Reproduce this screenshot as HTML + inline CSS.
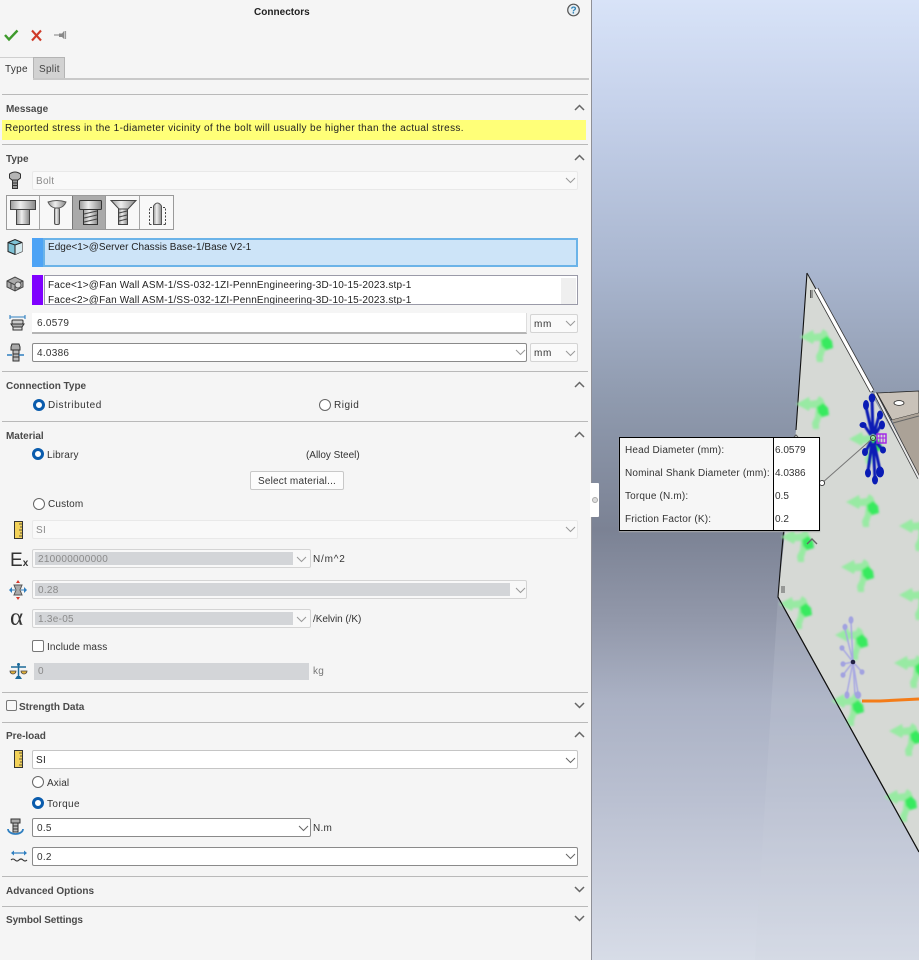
<!DOCTYPE html>
<html><head><meta charset="utf-8">
<style>
html,body{margin:0;padding:0}
body{width:919px;height:960px;overflow:hidden;position:relative;background:#f5f5f5;font-family:"Liberation Sans",sans-serif;font-size:10px;color:#333}
.a{position:absolute}
.t{position:absolute;white-space:nowrap;line-height:14px;letter-spacing:.28px;margin-top:2px}
.h{font-weight:bold;color:#4a4a4a;letter-spacing:-.02px}
.l{position:absolute;left:2px;width:586px;height:1px;background:#b9b9b9}
.f{position:absolute;box-sizing:border-box;background:#fff;border:1px solid #8a8a8a;border-radius:2px}
.d{position:absolute;box-sizing:border-box;background:#f9f9f9;border:1px solid #e9e9e9;border-radius:2px}
.g{position:absolute;box-sizing:border-box;background:#f8f8f8;border:1px solid #d4d4d4;border-radius:2px}
.i{position:absolute;background:#d3d5d8}
.r{position:absolute;box-sizing:border-box;width:12px;height:12px;border-radius:50%;border:1px solid #666;background:#fff}
.r.on{border:3.5px solid #0a5cad;background:#fff}
.c{position:absolute;overflow:visible}
</style></head><body>

<!-- viewport -->
<div class="a" style="left:592px;top:0;width:327px;height:960px;background:linear-gradient(180deg,#d8e3f8 0,#c5d1ea 110px,#a9b6cf 270px,#8f9aae 400px,#7b8294 530px,#9298aa 620px,#aab1c4 700px,#bac0d1 800px,#d7dce7 960px)"></div>
<svg class="a" style="left:592px;top:0" width="327" height="960" viewBox="592 0 327 960">
<defs>
<filter id="bl" x="-30%" y="-30%" width="160%" height="160%"><feGaussianBlur stdDeviation="1"/></filter>
<filter id="b2" x="-30%" y="-30%" width="160%" height="160%"><feGaussianBlur stdDeviation=".45"/></filter>
<g id="ar" filter="url(#bl)" transform="translate(0,-2)">
<path d="M-20 0L-7-7L-6-3L1-4L3-8L7-5L10 3L11 11L5 14L3 20L3 25L-3 25L-4 19L-1 13L0 4L-6 4L-7 7Z" fill="#98eaa3"/>
<path d="M1 3L7-1L12 4L13 11L6 13L2 9Z" fill="#37ea5e"/>
</g>
<g id="sp">
<g stroke-width="3" fill="none" filter="url(#b2)"><path d="M0-3L-1-37M-1-4L-7-30M1-4L6-21M2-2L8-12M-2-2L-9-12M-2 4L-7 14M2 4L9 12M-1 6L-5 34M0 6L2 41M1 6L7 33"/></g>
<g stroke="none">
<ellipse cx="-1" cy="-39" rx="3.300" ry="4.500"/><ellipse cx="-7" cy="-32" rx="3" ry="5"/><ellipse cx="7" cy="-22" rx="3" ry="4.500"/><ellipse cx="9" cy="-12" rx="3" ry="4.500"/><ellipse cx="-10" cy="-12" rx="3.500" ry="3"/><ellipse cx="-8" cy="15" rx="3" ry="4"/><ellipse cx="10" cy="13" rx="3" ry="3.500"/><ellipse cx="-5" cy="36" rx="3" ry="4.500"/><ellipse cx="2" cy="43" rx="3" ry="4.500"/><ellipse cx="7" cy="35" rx="4" ry="5.500"/>
</g></g>
<g id="sq" filter="url(#b2)">
<g stroke-width="1.500" fill="none"><path d="M0 0L-2-40M0 0L-8-33M0 0L-11-14M0 0L-10 2M0 0L-10 13M0 0L9 10M0 0L-6 31M0 0L5 31M0 0L2 33"/></g>
<g stroke="none">
<ellipse cx="-2" cy="-42" rx="2.500" ry="3.800"/><ellipse cx="-8" cy="-35" rx="2.500" ry="3.200"/><ellipse cx="-11" cy="-14" rx="2.500" ry="2.800"/><ellipse cx="-10" cy="2" rx="2.500" ry="2.800"/><ellipse cx="-10" cy="13" rx="2.500" ry="2.800"/><ellipse cx="9" cy="10" rx="2.500" ry="2.800"/><ellipse cx="-6" cy="33" rx="2.500" ry="3.800"/><ellipse cx="5" cy="33" rx="3.200" ry="3.800"/>
</g></g>
</defs>
<path d="M778 597L755 960L919 960L919 852Z" fill="#cdd3e0" opacity=".18"/>
<!-- plate -->
<path d="M807 273L870 392L919 478L919 852L778 597L796 430Z" fill="#d6d9d5"/>
<!-- box -->
<path d="M877 393L919 391L919 413L892 420Z" fill="#c9c2b9" stroke="#222" stroke-width=".8"/>
<path d="M892 420L919 413L919 478Z" fill="#aba297"/>
<path d="M893 423L919 416" stroke="#666" stroke-width="1"/>
<ellipse cx="899" cy="403" rx="5" ry="2.400" fill="#fff" stroke="#222" stroke-width=".8"/>
<!-- edges -->
<path d="M807 273L796 430M791 450L781 560L778 597L919 852" fill="none" stroke="#111" stroke-width="1.100"/>
<path d="M807 273L873 392" fill="none" stroke="#222" stroke-width="1"/>
<path d="M816 289L872 391" stroke="#333" stroke-width="5"/>
<path d="M816 289L872 391" stroke="#fff" stroke-width="3.400"/>
<path d="M875 393L919 478" stroke="#333" stroke-width="3.500"/>
<path d="M875 393L919 478" stroke="#e8e8e8" stroke-width="2"/>
<path d="M810.500 290v8M812 290v8" stroke="#222" stroke-width=".7"/>
<path d="M782 586v7M784 586v7" stroke="#222" stroke-width=".7"/>
<!-- arrows -->
<use href="#ar" x="820" y="339"/>
<use href="#ar" x="816" y="406"/>
<use href="#ar" x="866" y="504"/>
<use href="#ar" x="801" y="539"/>
<use href="#ar" x="861" y="569"/>
<use href="#ar" x="799" y="606"/>
<use href="#ar" x="919" y="597"/>
<use href="#ar" x="919" y="528"/>
<use href="#ar" x="855" y="637"/>
<use href="#ar" x="851" y="703"/>
<use href="#ar" x="914" y="665"/>
<use href="#ar" x="909" y="733"/>
<use href="#ar" x="904" y="799"/>
<use href="#ar" x="869" y="441"/>
<!-- re-draw bottom edge above the arrows -->
<path d="M778 597L919 852" fill="none" stroke="#111" stroke-width="1.100"/>
<!-- orange -->
<path d="M862 701L880 701L919 699" stroke="#f47c18" stroke-width="3" fill="none"/>
<!-- spiders -->
<use href="#sp" x="873" y="437" fill="#0a1cb5" stroke="#0a1cb5"/>
<use href="#sq" x="853" y="662" fill="#a2a2e0" stroke="#a8a8e2"/>
<circle cx="853" cy="662" r="2.300" fill="#224"/>
<rect x="877" y="434" width="9" height="9" fill="none" stroke="#a020e8" stroke-width="1.400"/>
<path d="M880 434v9M883 434v9M877 438h9" stroke="#a020e8" stroke-width="1"/>
<!-- small chevrons -->
<path d="M807 544L812 539L817 544" fill="none" stroke="#666" stroke-width="1.400"/>
<path d="M794 437L796 435L798 437" fill="none" stroke="#555" stroke-width="1"/>
<!-- leader -->
<path d="M822 483L873 438" stroke="#777" stroke-width="1"/>
<circle cx="822" cy="483" r="2.600" fill="#fff" stroke="#333" stroke-width=".9"/>
<circle cx="873" cy="438" r="2.600" fill="none" stroke="#333" stroke-width=".9"/>
</svg>
<div class="a" style="left:591px;top:0;width:1px;height:960px;background:#8f9097"></div>
<div class="a" style="left:590px;top:483px;width:9px;height:34px;background:#fff;border-radius:0 1px 1px 0"></div>
<div class="a" style="left:592px;top:497px;width:6px;height:6px;box-sizing:border-box;border-radius:50%;border:1px solid #aaa;background:#ddd"></div>

<!-- callout -->
<div class="a" style="left:619px;top:437px;width:199px;height:92px;border:1px solid #000;background:#f6f6f6;box-shadow:0 1px 1px #aaa"></div>
<div class="a" style="left:773px;top:438px;width:45px;height:92px;background:#fff;border-left:1px solid #000"></div>
<div class="t" style="left:625px;top:442px;letter-spacing:.17px">Head Diameter (mm):</div>
<div class="t" style="left:625px;top:465px;letter-spacing:.17px">Nominal Shank Diameter (mm):</div>
<div class="t" style="left:625px;top:488px;letter-spacing:.17px">Torque (N.m):</div>
<div class="t" style="left:625px;top:511px;letter-spacing:.17px">Friction Factor (K):</div>
<div class="t" style="left:775px;top:442px;letter-spacing:0">6.0579</div>
<div class="t" style="left:775px;top:465px;letter-spacing:0">4.0386</div>
<div class="t" style="left:775px;top:488px;letter-spacing:0">0.5</div>
<div class="t" style="left:775px;top:511px;letter-spacing:0">0.2</div>

<!-- header -->
<div class="t" style="left:254px;top:5px;margin-top:0;line-height:15px;font-weight:bold;color:#222;letter-spacing:.02px">Connectors</div>
<svg class="c" style="left:566px;top:3px" width="15" height="15" viewBox="0 0 15 15"><circle cx="7.500" cy="7" r="5.800" fill="#e8eef2" stroke="#555" stroke-width="1.200"/><text x="7.500" y="10.600" text-anchor="middle" font-family="Liberation Sans" font-weight="bold" font-size="10" fill="#2a80b5">?</text></svg>
<svg class="c" style="left:3px;top:28px" width="16" height="14" viewBox="0 0 16 14"><path d="M2 7L6 11.500L14.500 2.500" fill="none" stroke="#3e9a2c" stroke-width="2.400"/></svg>
<svg class="c" style="left:30px;top:29px" width="13" height="13" viewBox="0 0 13 13"><path d="M2 1.500L11 11.500M11 1.500L2 11.500" stroke="#cf3a28" stroke-width="2.100"/></svg>
<svg class="c" style="left:53px;top:29px" width="15" height="13" viewBox="0 0 15 13"><path d="M1 6h6" stroke="#999" stroke-width="1.300"/><path d="M6 4.500h3l2-2.500v8l-2-2H6z" fill="#888"/><rect x="11.500" y="2" width="1.600" height="8" fill="#999"/></svg>

<!-- tabs -->
<div class="a" style="left:33px;top:57px;width:32px;height:22px;box-sizing:border-box;background:#d2d2d2;border:1px solid #b4b4b4;border-bottom:0"></div>
<div class="a" style="left:0;top:57px;width:33px;height:1px;background:#cfcfcf"></div>
<div class="t" style="left:5px;top:61px">Type</div>
<div class="t" style="left:39px;top:61px;color:#444">Split</div>
<div class="a" style="left:33px;top:78px;width:556px;height:2px;background:#c9c9c9"></div>

<!-- sections -->
<div class="l" style="top:94px"></div>
<div class="t h" style="left:6px;top:101px">Message</div>
<div class="a" style="left:2px;top:120px;width:584px;height:20px;background:#ffff78"></div>
<div class="t" style="left:5px;top:120px;color:#222;letter-spacing:.35px">Reported stress in the 1-diameter vicinity of the bolt will usually be higher than the actual stress.</div>
<div class="l" style="top:144px"></div>
<div class="t h" style="left:6px;top:151px">Type</div>

<svg class="c" style="left:8px;top:171px" width="14" height="18" viewBox="0 0 14 18"><path d="M1.500 3Q7-1 12.500 3V7L10 9H4L1.500 7Z" fill="#b5b5b5" stroke="#333"/><rect x="4.500" y="9" width="5" height="8.500" fill="#999" stroke="#333"/><path d="M4.500 12h5M4.500 14.500h5" stroke="#333"/></svg>
<div class="d" style="left:32px;top:171px;width:546px;height:19px"></div>
<div class="t" style="left:36px;top:173px;color:#8a8a8a">Bolt</div>

<!-- toolbar -->
<div class="a" style="left:6px;top:195px;width:168px;height:35px;box-sizing:border-box;border:1px solid #9a9a9a;background:#f8f8f8"></div>
<div class="a" style="left:72px;top:196px;width:34px;height:33px;background:#aaa"></div>
<div class="a" style="left:39px;top:196px;width:1px;height:33px;background:#a5a5a5"></div>
<div class="a" style="left:72px;top:196px;width:1px;height:33px;background:#777"></div>
<div class="a" style="left:105px;top:196px;width:1px;height:33px;background:#999"></div>
<div class="a" style="left:139px;top:196px;width:1px;height:33px;background:#a5a5a5"></div>
<svg class="c" style="left:6px;top:195px" width="168" height="35" viewBox="0 0 168 35">
<defs><linearGradient id="m"><stop offset="0" stop-color="#9a9a9a"/><stop offset=".4" stop-color="#eee"/><stop offset="1" stop-color="#888"/></linearGradient></defs>
<rect x="4.500" y="5.500" width="25" height="9" fill="url(#m)" stroke="#444"/><rect x="10.500" y="14.500" width="13" height="15" fill="url(#m)" stroke="#444"/>
<path d="M42 7Q51 4 60 7Q58 12 53 13H49Q44 12 42 7Z" fill="url(#m)" stroke="#555"/><rect x="48.500" y="13" width="5" height="16.500" rx="1.500" fill="url(#m)" stroke="#555"/>
<rect x="73.500" y="5.500" width="22" height="9" rx="1" fill="url(#m)" stroke="#333"/><rect x="77.500" y="14.500" width="14" height="15" fill="url(#m)" stroke="#333"/><path d="M78 19l13-3M78 23l13-3M78 27l13-3" stroke="#444"/>
<path d="M105 5.500h25l-8 8.500h-9z" fill="url(#m)" stroke="#444"/><rect x="112.500" y="14" width="9" height="15.500" fill="url(#m)" stroke="#444"/><path d="M113 18l8-2M113 22l8-2M113 26l8-2" stroke="#444"/>
<path d="M143.500 29.500v-17h3M159.500 29.500v-17h-3M143.500 29.500h16" fill="none" stroke="#444" stroke-dasharray="2 1.500"/>
<path d="M147.500 29.500V11Q151.500 5 155.500 11V29.500Z" fill="url(#m)" stroke="#555"/>
</svg>

<!-- edge -->
<svg class="c" style="left:7px;top:238px" width="16" height="18" viewBox="0 0 16 18"><path d="M1 4.500L8 1.500L15 4.500V13.500L8 16.500L1 13.500Z" fill="#7fc3d6" stroke="#222"/><path d="M8 7L15 4.500V13.500L8 16.500Z" fill="#d5e9ee"/><path d="M1 4.500L8 7L15 4.500M8 7V16.500" fill="none" stroke="#222"/></svg>
<div class="a" style="left:32px;top:238px;width:11px;height:29px;background:#4da3f5"></div>
<div class="a" style="left:43px;top:238px;width:535px;height:29px;box-sizing:border-box;background:#cde4f8;border:2px solid #6bb3e8"></div>
<div class="t" style="left:48px;top:239px;color:#222;letter-spacing:.02px">Edge&lt;1&gt;@Server Chassis Base-1/Base V2-1</div>

<!-- face -->
<svg class="c" style="left:6px;top:275px" width="18" height="18" viewBox="0 0 18 18"><path d="M1 6L9 2L17 6V12L9 16L1 12Z" fill="#aaa" stroke="#444"/><path d="M1 6L9 10L17 6M5 8V13M9 10V16M13 8V14" fill="none" stroke="#444"/><circle cx="12" cy="10" r="3" fill="#ddd" stroke="#555"/></svg>
<div class="a" style="left:32px;top:275px;width:11px;height:30px;background:#7f00ff"></div>
<div class="a" style="left:44px;top:275px;width:534px;height:30px;box-sizing:border-box;background:#fff;border:1px solid #9a9aa8;overflow:hidden">
<div class="t" style="left:3px;top:1px;color:#222;letter-spacing:.18px">Face&lt;1&gt;@Fan Wall ASM-1/SS-032-1ZI-PennEngineering-3D-10-15-2023.stp-1</div>
<div class="t" style="left:3px;top:16px;color:#222;letter-spacing:.18px">Face&lt;2&gt;@Fan Wall ASM-1/SS-032-1ZI-PennEngineering-3D-10-15-2023.stp-1</div>
<div class="a" style="left:516px;top:2px;width:15px;height:26px;background:#efefef"></div>
</div>

<!-- dims -->
<svg class="c" style="left:9px;top:314px" width="18" height="18" viewBox="0 0 18 18"><path d="M1 3h15M1 1v4M16 1v4" stroke="#2f7fc0" stroke-width="1.100" fill="none"/><rect x="3" y="6" width="11" height="4" rx="1" fill="#ccc" stroke="#333"/><path d="M2 10h13l-2 3H4z" fill="#aaa" stroke="#333"/><rect x="4" y="13" width="9" height="3" fill="#ddd" stroke="#333"/></svg>
<div class="a" style="left:32px;top:313px;width:495px;height:21px;box-sizing:border-box;background:#fff;border-bottom:2px solid #b5b5b5;border-right:1px solid #ddd"></div>
<div class="t" style="left:37px;top:315px">6.0579</div>
<div class="g" style="left:530px;top:314px;width:48px;height:19px;background:#fafafa"></div>
<div class="t" style="left:534px;top:316px;color:#333;letter-spacing:.7px">mm</div>
<svg class="c" style="left:6px;top:343px" width="18" height="19" viewBox="0 0 18 19"><path d="M6 1h7l1 3v3H5V4z" fill="#aaa" stroke="#333"/><rect x="7" y="7" width="6" height="11" fill="#bbb" stroke="#333"/><path d="M7 11h6M7 14h6" stroke="#333"/><path d="M1 12h5M18 12h-5" stroke="#2f7fc0" stroke-width="1.400"/></svg>
<div class="f" style="left:32px;top:343px;width:495px;height:19px"></div>
<div class="t" style="left:37px;top:345px">4.0386</div>
<div class="g" style="left:530px;top:343px;width:48px;height:19px;background:#fafafa"></div>
<div class="t" style="left:534px;top:345px;color:#333;letter-spacing:.7px">mm</div>

<div class="l" style="top:371px"></div>
<div class="t h" style="left:6px;top:378px">Connection Type</div>
<div class="r on" style="left:33px;top:399px"></div>
<div class="t" style="left:48px;top:397px;letter-spacing:.55px">Distributed</div>
<div class="r" style="left:319px;top:399px"></div>
<div class="t" style="left:334px;top:397px;letter-spacing:.5px">Rigid</div>

<div class="l" style="top:421px"></div>
<div class="t h" style="left:6px;top:428px">Material</div>
<div class="r on" style="left:32px;top:448px"></div>
<div class="t" style="left:47px;top:447px;letter-spacing:.15px">Library</div>
<div class="t" style="left:306px;top:447px;letter-spacing:-.02px">(Alloy Steel)</div>
<div class="a" style="left:250px;top:471px;width:94px;height:19px;box-sizing:border-box;background:#fcfcfc;border:1px solid #c8c8c8;border-radius:2px;text-align:center;line-height:19px;letter-spacing:.2px">Select material...</div>
<div class="r" style="left:33px;top:498px"></div>
<div class="t" style="left:48px;top:496px;letter-spacing:.15px">Custom</div>

<svg class="c" style="left:14px;top:521px" width="10" height="18" viewBox="0 0 10 18"><rect x=".5" y=".5" width="8" height="17" fill="#f3d25a" stroke="#333"/><path d="M5 3h3M6 6h2M5 9h3M6 12h2M5 15h3" stroke="#333" stroke-width=".8"/></svg>
<div class="d" style="left:32px;top:520px;width:546px;height:19px"></div>
<div class="t" style="left:36px;top:522px;color:#8a8a8a">SI</div>

<div class="t" style="left:10px;top:549px;font-size:19px;letter-spacing:0;color:#333;line-height:20px">E<span style="font-size:10px;font-weight:bold">x</span></div>
<div class="g" style="left:32px;top:549px;width:279px;height:19px"></div>
<div class="i" style="left:35px;top:552px;width:258px;height:13px"></div>
<div class="t" style="left:38px;top:551px;color:#8a8a8a">210000000000</div>
<div class="t" style="left:313px;top:551px;letter-spacing:.8px">N/m^2</div>

<svg class="c" style="left:9px;top:580px" width="18" height="20" viewBox="0 0 18 20"><path d="M9 0L11 3H7ZM9 20L7 17H11Z" fill="#d8372a"/><path d="M5 5h8l-2 5 2 5H5l2-5z" fill="#aaa" stroke="#555"/><path d="M0 10L3 7V13ZM18 10L15 13V7Z" fill="#2f7fc0"/><path d="M3 10h3M12 10h3" stroke="#2f7fc0"/></svg>
<div class="g" style="left:32px;top:580px;width:495px;height:19px"></div>
<div class="i" style="left:35px;top:583px;width:475px;height:13px"></div>
<div class="t" style="left:38px;top:582px;color:#8a8a8a">0.28</div>

<div class="t" style="left:10px;top:605px;font-family:'Liberation Serif',serif;font-size:25px;letter-spacing:0;line-height:22px;color:#333">α</div>
<div class="g" style="left:32px;top:609px;width:279px;height:19px"></div>
<div class="i" style="left:35px;top:612px;width:258px;height:13px"></div>
<div class="t" style="left:38px;top:611px;color:#8a8a8a">1.3e-05</div>
<div class="t" style="left:313px;top:611px;letter-spacing:-.05px">/Kelvin (/K)</div>

<div class="a" style="left:32px;top:640px;width:12px;height:12px;box-sizing:border-box;border:1px solid #777;border-radius:2px;background:#fff"></div>
<div class="t" style="left:47px;top:639px;letter-spacing:.12px">Include mass</div>

<svg class="c" style="left:9px;top:662px" width="19" height="19" viewBox="0 0 19 19"><path d="M9.500 1v14M2 5h15" stroke="#1d6b9a" stroke-width="1.500"/><path d="M6 17h7l-2-3H8z" fill="#1d6b9a"/><path d="M1 9h6a3 3 0 0 1-6 0zM12 9h6a3 3 0 0 1-6 0z" fill="#e3b23c" stroke="#444" stroke-width=".8"/><circle cx="9.500" cy="2.500" r="1.500" fill="#1d6b9a"/></svg>
<div class="a" style="left:34px;top:663px;width:275px;height:17px;background:#d3d5d8"></div>
<div class="t" style="left:38px;top:663px;color:#8a8a8a">0</div>
<div class="t" style="left:313px;top:663px;color:#777">kg</div>

<div class="l" style="top:692px"></div>
<div class="a" style="left:6px;top:700px;width:11px;height:11px;box-sizing:border-box;border:1px solid #777;border-radius:2px;background:#f8f8f8"></div>
<div class="t h" style="left:19px;top:699px">Strength Data</div>
<div class="l" style="top:722px"></div>
<div class="t h" style="left:6px;top:728px">Pre-load</div>

<svg class="c" style="left:14px;top:750px" width="10" height="18" viewBox="0 0 10 18"><rect x=".5" y=".5" width="8" height="17" fill="#f3d25a" stroke="#333"/><path d="M5 3h3M6 6h2M5 9h3M6 12h2M5 15h3" stroke="#333" stroke-width=".8"/></svg>
<div class="g" style="left:32px;top:750px;width:546px;height:19px;background:#fff;border-color:#c5c5c5"></div>
<div class="t" style="left:36px;top:752px;color:#222">SI</div>
<div class="r" style="left:32px;top:776px"></div>
<div class="t" style="left:47px;top:775px;letter-spacing:.1px">Axial</div>
<div class="r on" style="left:32px;top:797px"></div>
<div class="t" style="left:47px;top:796px;letter-spacing:.4px">Torque</div>

<svg class="c" style="left:7px;top:818px" width="17" height="18" viewBox="0 0 17 18"><path d="M4 1h9v4H4z" fill="#aaa" stroke="#333"/><rect x="6" y="5" width="5" height="9" fill="#bbb" stroke="#333"/><path d="M6 8h5M6 11h5" stroke="#333"/><path d="M1 11a7.500 5 0 0 0 15 0" fill="none" stroke="#2f7fc0" stroke-width="1.800"/></svg>
<div class="f" style="left:32px;top:818px;width:279px;height:19px"></div>
<div class="t" style="left:37px;top:820px">0.5</div>
<div class="t" style="left:313px;top:820px">N.m</div>
<svg class="c" style="left:10px;top:849px" width="18" height="14" viewBox="0 0 18 14"><path d="M2 4h14" stroke="#2f7fc0" stroke-width="1.200"/><path d="M1 4l3-2.500v5zM17 4l-3-2.500v5z" fill="#2f7fc0"/><path d="M1 11q2-2 4 0t4 0 4 0 4 0" fill="none" stroke="#333" stroke-width="1.100"/></svg>
<div class="f" style="left:32px;top:847px;width:546px;height:19px"></div>
<div class="t" style="left:37px;top:849px">0.2</div>

<div class="l" style="top:876px"></div>
<div class="t h" style="left:6px;top:883px">Advanced Options</div>
<div class="l" style="top:906px"></div>
<div class="t h" style="left:6px;top:912px;letter-spacing:-.1px">Symbol Settings</div>

<!-- chevrons -->
<svg class="a" style="left:0;top:0" width="590" height="960" viewBox="0 0 590 960" fill="none">
<g stroke="#666" stroke-width="1.500">
<path d="M575 110L579.500 105.500L584 110M575 160L579.500 155.500L584 160M575 387L579.500 382.500L584 387M575 437L579.500 432.500L584 437M575 737L579.500 732.500L584 737"/>
<path d="M575 703L579.500 707.500L584 703M575 887L579.500 891.500L584 887M575 916L579.500 920.500L584 916"/>
</g>
<g stroke="#999" stroke-width="1">
<path d="M566 178L570.500 182.500L575 178M566 321L570.500 325.500L575 321M566 351L570.500 355.500L575 351M516 350L520.500 354.500L525 350M566 527L570.500 531.500L575 527M297 557L301.500 561.500L306 557M516 588L520.500 592.500L525 588M297 617L301.500 621.500L306 617"/>
</g>
<g stroke="#666" stroke-width="1">
<path d="M566 758L570.500 762.500L575 758M299 826L303.500 830.500L308 826M566 854L570.500 858.500L575 854"/>
</g>
</svg>
</body></html>
